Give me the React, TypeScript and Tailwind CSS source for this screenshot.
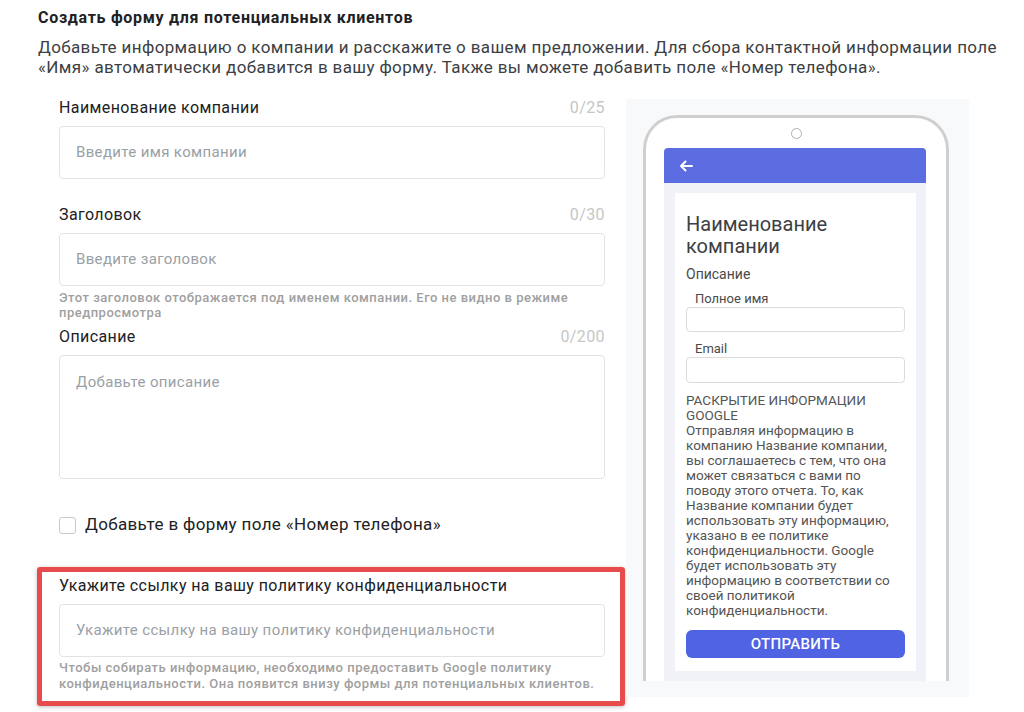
import React from 'react';

const disclosure = [
  'РАСКРЫТИЕ ИНФОРМАЦИИ',
  'GOOGLE',
  'Отправляя информацию в',
  'компанию Название компании,',
  'вы соглашаетесь с тем, что она',
  'может связаться с вами по',
  'поводу этого отчета. То, как',
  'Название компании будет',
  'использовать эту информацию,',
  'указано в ее политике',
  'конфиденциальности. Google',
  'будет использовать эту',
  'информацию в соответствии со',
  'своей политикой',
  'конфиденциальности.'];

function FieldLabel({ label, counter }: {label: string;counter?: string;}) {
  return (
    <div className="flex items-center justify-between h-[20px] text-[16px] leading-[20px] tracking-[0.4px] whitespace-nowrap">
      <span className="text-[#202124]">{label}</span>
      {counter && <span className="text-[#c4c7c5]">{counter}</span>}
    </div>);

}

function Input({ placeholder }: {placeholder: string;}) {
  return (
    <div className="mt-[8px] h-[53px] rounded-[4px] border border-[#e3e3e3] flex items-center px-[16px] text-[15px] tracking-[0.35px] text-[#9aa0a6] whitespace-nowrap">
      {placeholder}
    </div>);

}

export default function App() {
  return (
    <div className="w-[1024px] h-[712px] bg-white overflow-hidden font-['Roboto',sans-serif]">
      {/* Header */}
      <div className="pl-[38px] pt-[8px]">
        <h1 className="text-[16px] leading-[20px] font-bold tracking-[0.7px] text-[#202124]">
          Создать форму для потенциальных клиентов
        </h1>
        <p className="mt-[9px] text-[17px] leading-[20px] tracking-[0.37px] text-[#3c4043] whitespace-nowrap">
          Добавьте информацию о компании и расскажите о вашем предложении. Для сбора контактной информации поле
          <br />
          «Имя» автоматически добавится в вашу форму. Также вы можете добавить поле «Номер телефона».
        </p>
      </div>

      <div className="flex mt-[21px]">
        {/* Form column */}
        <div className="ml-[37px] w-[588px]">
          <div className="px-[22px] pr-[20px]">
            <FieldLabel label="Наименование компании" counter="0/25" />
            <Input placeholder="Введите имя компании" />

            <div className="mt-[26px]">
              <FieldLabel label="Заголовок" counter="0/30" />
              <Input placeholder="Введите заголовок" />
              <p className="mt-[4px] text-[13px] leading-[15px] font-medium tracking-[0.5px] text-[#a0a0a0] whitespace-nowrap">
                Этот заголовок отображается под именем компании. Его не видно в режиме
                <br />
                предпросмотра
              </p>
            </div>

            <div className="mt-[7px]">
              <FieldLabel label="Описание" counter="0/200" />
              <div className="mt-[8px] h-[124px] rounded-[4px] border border-[#e3e3e3] px-[16px] pt-[16px] text-[15px] leading-[20px] tracking-[0.35px] text-[#9aa0a6]">
                Добавьте описание
              </div>
            </div>

            <label className="mt-[36px] flex items-center gap-[9px] h-[20px]">
              <span className="w-[17px] h-[17px] rounded-[3px] border border-[#c9c9c9] bg-white" />
              <span className="text-[17px] tracking-[0.35px] text-[#202124] whitespace-nowrap">
                Добавьте в форму поле «Номер телефона»
              </span>
            </label>
          </div>

          {/* Highlighted privacy field */}
          <div className="mt-[32px] border-[5px] border-[#e84b4b] rounded-[3px] pl-[17px] pr-[15px] pt-[4px] pb-[9px] shadow-[0_1px_4px_rgba(0,0,0,0.25)]">
            <FieldLabel label="Укажите ссылку на вашу политику конфиденциальности" />
            <Input placeholder="Укажите ссылку на вашу политику конфиденциальности" />
            <p className="mt-[3px] text-[13px] leading-[16px] font-medium tracking-[0.5px] text-[#a0a0a0] whitespace-nowrap">
              Чтобы собирать информацию, необходимо предоставить Google политику
              <br />
              конфиденциальности. Она появится внизу формы для потенциальных клиентов.
            </p>
          </div>
        </div>

        {/* Preview column */}
        <div className="ml-[1px] w-[343px] h-[598px] mt-[1px] bg-[#f8f9fb] pl-[17px] pt-[16px]">
          <div className="w-[306px] h-[566px] border-[3px] border-b-0 border-[#cfcfcf] rounded-t-[34px] bg-white flex flex-col">
            <div className="flex justify-center pt-[10px] h-[30px]">
              <span className="w-[11px] h-[11px] rounded-full border border-[#b0b0b0]" />
            </div>
            <div className="ml-[18px] w-[262px] flex-1 flex flex-col">
              <div className="h-[35px] rounded-t-[4px] bg-[#5b6de1] flex items-center pl-[15px]">
                <svg width="14" height="12" viewBox="0 0 14 12" fill="none">
                  <path d="M13 6H2M6.5 1.5L2 6l4.5 4.5" stroke="white" strokeWidth="2" strokeLinecap="round" strokeLinejoin="round" />
                </svg>
              </div>
              <div className="flex-1 bg-[#f1f2f7] pl-[11px] pr-[10px] pt-[10px] pb-[10px]">
                <div className="h-full bg-white px-[11px] pt-[20px] text-[#4a4a4a]">
                  <div className="text-[20px] leading-[22px] text-[#3c4043]">
                    Наименование
                    <br />
                    компании
                  </div>
                  <div className="mt-[8px] text-[14px] leading-[18px]">Описание</div>
                  <div className="mt-[8px] pl-[9px] text-[13px] leading-[16px]">Полное имя</div>
                  <div className="h-[25px] rounded-[4px] border border-[#dcdcdc]" />
                  <div className="mt-[9px] pl-[9px] text-[13px] leading-[16px]">Email</div>
                  <div className="h-[26px] rounded-[4px] border border-[#dcdcdc]" />
                  <div className="mt-[10px] text-[13.5px] leading-[15px] text-[#555] whitespace-nowrap">
                    {disclosure.map((line, i) =>
                    <div key={i}>{line}</div>
                    )}
                  </div>
                  <div className="mt-[12px] h-[28px] rounded-[6px] bg-[#4f63e3] flex items-center justify-center text-white text-[15px] font-medium tracking-[0.3px]">
                    ОТПРАВИТЬ
                  </div>
                </div>
              </div>
            </div>
          </div>
        </div>
      </div>
    </div>);

}
